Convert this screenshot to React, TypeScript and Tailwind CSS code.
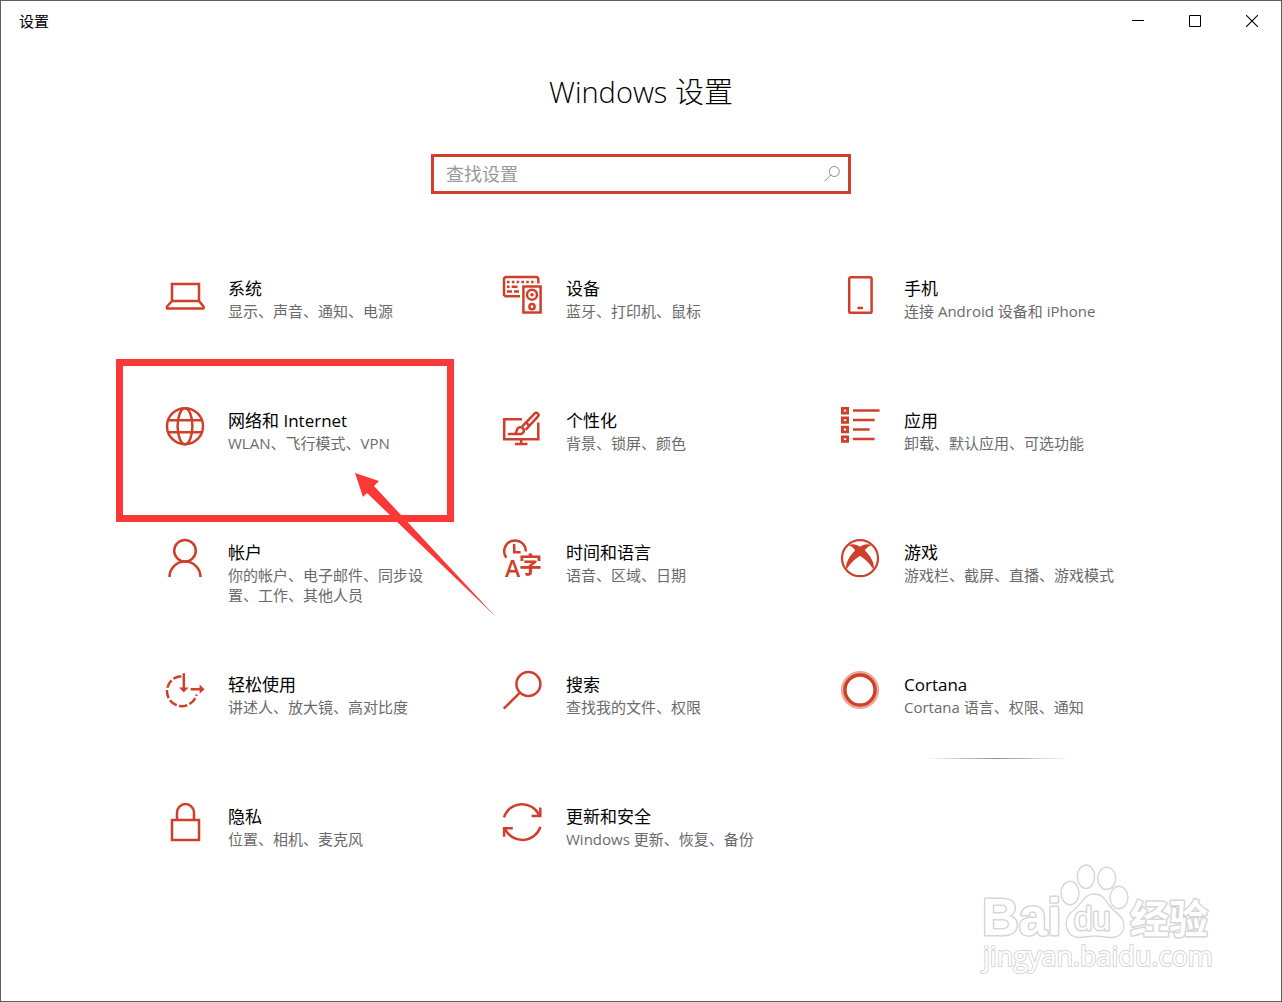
import type { ReactNode } from 'react'

type SettingsItem = {
  id: string
  title: string
  description: string
  icon: ReactNode
}

// 图标统一使用 42x42 画布，描边颜色继承自 currentColor
function Icon({ children }: { children: ReactNode }) {
  return (
    <svg
      width="42"
      height="42"
      viewBox="0 0 42 42"
      fill="none"
      stroke="currentColor"
      strokeWidth="2.5"
      className="shrink-0 overflow-visible text-[#cf3f29]"
      aria-hidden="true"
    >
      {children}
    </svg>
  )
}

const items: SettingsItem[] = [
  {
    id: 'system',
    title: '系统',
    description: '显示、声音、通知、电源',
    icon: (
      <Icon>
        <path d="M8 26V9H35V26" />
        <path d="M8 26H35L39.5 31.5V33.5H3V31.5Z" strokeLinejoin="round" />
      </Icon>
    ),
  },
  {
    id: 'devices',
    title: '设备',
    description: '蓝牙、打印机、鼠标',
    icon: (
      <Icon>
        <path d="M18 21.3H3.5L2 20V3.5L3.5 2H35L36.3 3.5V8.5" />
        <path d="M5 7H34" strokeDasharray="2.6 2.2" />
        <path d="M5 11.7H7.6M9.6 11.7H15.5M5 16.5H10M12 16.5H17" />
        <path d="M21.4 11.4H38.6V37.6H21.4Z" />
        <circle cx="30" cy="19.7" r="5" />
        <circle cx="30" cy="19.7" r="1.8" fill="currentColor" stroke="none" />
        <circle cx="30" cy="31.7" r="2.6" />
      </Icon>
    ),
  },
  {
    id: 'phone',
    title: '手机',
    description: '连接 Android 设备和 iPhone',
    icon: (
      <Icon>
        <rect x="9.2" y="2.2" width="22.4" height="35.6" rx="1.6" />
        <path d="M17.4 33H23" />
      </Icon>
    ),
  },
  {
    id: 'network',
    title: '网络和 Internet',
    description: 'WLAN、飞行模式、VPN',
    icon: (
      <Icon>
        <circle cx="21" cy="19.2" r="18" />
        <ellipse cx="21" cy="19.2" rx="7.4" ry="18" />
        <path d="M4.5 13.2H37.5M4.5 25.2H37.5" />
      </Icon>
    ),
  },
  {
    id: 'personalization',
    title: '个性化',
    description: '背景、锁屏、颜色',
    icon: (
      <Icon>
        <path d="M20 12.2H2.2V32.3H36.3V15.5" />
        <path d="M19.2 33V36.5M13 37H25.5" />
        <path d="M20 19.6L32.8 6.4C34.6 4.6 37.8 7.4 36 9.4L23.6 22.8" />
        <path d="M24 15.6L28 19.4" />
        <path d="M5.8 27H19C21.4 26.4 22.6 24 21.4 21.6C19.6 19.4 15.8 20 15 22.6C14.6 24.6 14.6 26 12.6 27" />
      </Icon>
    ),
  },
  {
    id: 'apps',
    title: '应用',
    description: '卸载、默认应用、可选功能',
    icon: (
      <Icon>
        <path
          d="M2.4 1.4H7.6V6H2.4ZM2.4 10.8H7.6V15.4H2.4ZM2.4 20.2H7.6V24.8H2.4ZM2.4 29.8H7.6V34.4H2.4Z"
          strokeWidth="2.8"
        />
        <path d="M13 3.5H39.6M13 13H34.6M13 22.5H29.6M13 32H34.6" />
      </Icon>
    ),
  },
  {
    id: 'accounts',
    title: '帐户',
    description: '你的帐户、电子邮件、同步设置、工作、其他人员',
    icon: (
      <Icon>
        <circle cx="21" cy="11.7" r="10.8" />
        <path d="M5.5 38A15.5 15.5 0 0 1 36.5 38" />
      </Icon>
    ),
  },
  {
    id: 'time',
    title: '时间和语言',
    description: '语音、区域、日期',
    icon: (
      <Icon>
        <path d="M4.4 18.8A10.8 10.8 0 1 1 23.8 12.4" />
        <path d="M12.2 5V13.2H18.6" />
        <g fill="currentColor" stroke="none">
          <text x="3" y="38" className="font-['Open_Sans'] text-[23px] font-semibold">
            A
          </text>
          <text x="17" y="34" className="font-['Noto_Sans_CJK_SC'] text-[23px] font-bold">
            字
          </text>
        </g>
      </Icon>
    ),
  },
  {
    id: 'gaming',
    title: '游戏',
    description: '游戏栏、截屏、直播、游戏模式',
    icon: (
      <Icon>
        <circle cx="20" cy="19.2" r="18" strokeWidth="2.2" />
        <path
          d="M8.5 6.4C12.5 4 17 5.8 20 7.8C23 5.8 27.5 4 31.5 6.4C29 6.5 26.8 8.6 24.8 11.2C30.4 17 35.6 24.5 33.4 31C31.4 26 25.5 20.5 20 16.8C14.5 20.5 8.6 26 6.6 31C4.4 24.5 9.6 17 15.2 11.2C13.2 8.6 11 6.5 8.5 6.4Z"
          fill="currentColor"
          stroke="none"
        />
      </Icon>
    ),
  },
  {
    id: 'ease',
    title: '轻松使用',
    description: '讲述人、放大镜、高对比度',
    icon: (
      <Icon>
        <path d="M17.3 5.2A15 15 0 1 0 32.6 23.4" strokeDasharray="8.4 2.4" />
        <path d="M19.8 2.3V18M26.7 18.2H37" />
        <path d="M15 16.4H24.6L19.8 21.6ZM35.6 13.6V22.8L40.6 18.2Z" fill="currentColor" stroke="none" />
      </Icon>
    ),
  },
  {
    id: 'search',
    title: '搜索',
    description: '查找我的文件、权限',
    icon: (
      <Icon>
        <circle cx="26.4" cy="13" r="12" />
        <path d="M17.6 21.8L1.7 37.7" />
      </Icon>
    ),
  },
  {
    id: 'cortana',
    title: 'Cortana',
    description: 'Cortana 语言、权限、通知',
    icon: (
      <Icon>
        <circle cx="20" cy="19" r="17.4" className="stroke-[#eba99e]" strokeWidth="3.4" />
        <circle cx="20" cy="19" r="15" strokeWidth="3.4" />
      </Icon>
    ),
  },
  {
    id: 'privacy',
    title: '隐私',
    description: '位置、相机、麦克风',
    icon: (
      <Icon>
        <path d="M8 17H35V37H8Z" />
        <path d="M13 17V9.6A8.5 8.5 0 0 1 30 9.6V17" />
      </Icon>
    ),
  },
  {
    id: 'update',
    title: '更新和安全',
    description: 'Windows 更新、恢复、备份',
    icon: (
      <Icon>
        <path d="M2 14.3A19 19 0 0 1 37.4 12.4M38.4 23.8A19 19 0 0 1 3 25.7" />
        <path d="M38.3 4.4V12.9H29.6M2.1 33.7V25.2H10.8" />
      </Icon>
    ),
  },
]

function TitleBar() {
  return (
    <header className="flex h-10 items-center justify-between pr-px pl-[18px]">
      <span className="text-[15px] leading-5 text-black">设置</span>
      <div className="flex h-full">
        <button type="button" aria-label="最小化" className="flex w-[57px] items-center justify-center">
          <svg width="12" height="12" viewBox="0 0 12 12" stroke="#000" aria-hidden="true">
            <path d="M0 5.5H12" />
          </svg>
        </button>
        <button type="button" aria-label="最大化" className="flex w-[57px] items-center justify-center">
          <svg width="12" height="12" viewBox="0 0 12 12" fill="none" stroke="#000" aria-hidden="true">
            <path d="M.5 .5H11.5V11.5H.5Z" />
          </svg>
        </button>
        <button type="button" aria-label="关闭" className="flex w-[57px] items-center justify-center">
          <svg width="12" height="12" viewBox="0 0 12 12" stroke="#000" strokeWidth="1.1" aria-hidden="true">
            <path d="M0 0L12 12M12 0L0 12" />
          </svg>
        </button>
      </div>
    </header>
  )
}

function SearchBox() {
  return (
    <form className="mx-auto mt-[42px] flex h-10 w-[420px] max-w-full items-center border-3 border-[#cf3f29] pr-2 pl-3">
      <input
        type="text"
        aria-label="查找设置"
        placeholder="查找设置"
        className="min-w-0 flex-1 bg-transparent text-[18px] leading-6 text-black outline-none placeholder:text-[#999999]"
      />
      <button type="submit" aria-label="搜索" className="shrink-0">
        <svg width="16" height="16" viewBox="0 0 16 16" fill="none" stroke="#8c8c8c" aria-hidden="true">
          <circle cx="10.3" cy="5.5" r="5" />
          <path d="M6.7 9L.5 15.3" />
        </svg>
      </button>
    </form>
  )
}

// 红框与箭头标注，覆盖在“网络和 Internet”上
function Highlight() {
  return (
    <div className="pointer-events-none absolute -top-12 -left-[18px] h-[163px] w-full border-7 border-[#fb3838]">
      <svg
        width="142"
        height="144"
        viewBox="0 0 142 144"
        className="absolute top-[107px] left-[232px] max-w-none fill-[#fb3838]"
        aria-hidden="true"
      >
        <path d="M0 0L24 8L19 13L141 144L12 20L8 24Z" />
      </svg>
    </div>
  )
}

function SettingsTile({ item }: { item: SettingsItem }) {
  return (
    <li className="relative min-h-[132px]">
      <a href={`#${item.id}`} className="flex gap-[22px] px-[30px]">
        {item.icon}
        <div className="min-w-0 flex-1 pt-0.5">
          <h2 className="text-[17px] leading-6 text-black">{item.title}</h2>
          <p className="text-[15px] leading-5 text-[#6a6a6a]">{item.description}</p>
        </div>
      </a>
      {item.id === 'network' && <Highlight />}
      {item.id === 'cortana' && (
        <div className="absolute top-[87px] left-[114px] h-px w-[146px] bg-linear-to-r from-transparent via-[#909090] to-transparent" />
      )}
    </li>
  )
}

function Watermark() {
  return (
    <svg
      width="232"
      height="114"
      viewBox="0 0 232 114"
      fill="#fff"
      stroke="#d6d6d6"
      strokeWidth="1.4"
      strokeLinejoin="round"
      className="pointer-events-none absolute right-[67px] bottom-[25px] overflow-visible"
      aria-hidden="true"
    >
      <text x="0" y="73" strokeWidth="3" className="font-['Liberation_Sans'] text-[51px] font-bold [paint-order:stroke]">
        Bai
      </text>
      <ellipse cx="88" cy="31" rx="9" ry="11.7" />
      <ellipse cx="104" cy="14.7" rx="8.6" ry="11.7" />
      <ellipse cx="124.7" cy="16.3" rx="9" ry="11.2" />
      <ellipse cx="137" cy="35.5" rx="9" ry="11.2" />
      <path d="M112 32C103 32 100 41 93 47C86 52 83 58 84.5 65C86 72 91 76 98 75.5C104 75 108 74 113 74C119 74 124 76 130 75.5C138 75 142 70 142 63C142 54 133 51 127 43C123 37 120 32 112 32Z" />
      <text x="92" y="68" strokeWidth="3" className="font-['Liberation_Sans'] text-[33px] [paint-order:stroke]">
        du
      </text>
      <text x="148" y="71" strokeWidth="3" className="font-['Noto_Sans_CJK_SC'] text-[39px] font-bold [paint-order:stroke]">
        经验
      </text>
      <text x="1" y="104" strokeWidth="2" className="font-['Open_Sans'] text-[27px] [paint-order:stroke]">
        jingyan.baidu.com
      </text>
    </svg>
  )
}

export default function App() {
  return (
    <div className="relative min-h-screen border border-[#5c5f62] bg-white font-['Open_Sans','Noto_Sans_CJK_SC',sans-serif]">
      <TitleBar />
      <main>
        <h1 className="mt-[31px] text-center text-[29px] leading-10 font-light text-black">Windows 设置</h1>
        <SearchBox />
        <ul className="mx-auto mt-[81px] grid max-w-[1014px] grid-cols-3">
          {items.map((item) => (
            <SettingsTile key={item.id} item={item} />
          ))}
        </ul>
      </main>
      <Watermark />
    </div>
  )
}
